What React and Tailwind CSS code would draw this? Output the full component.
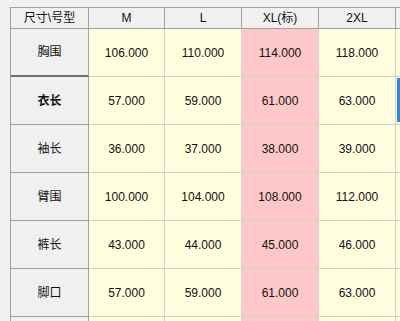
import React from 'react';

const SIZES = ['M', 'L', 'XL(标)', '2XL'];
const ROWS = [
  { name: '胸围', vals: ['106.000', '110.000', '114.000', '118.000'] },
  { name: '衣长', vals: ['57.000', '59.000', '61.000', '63.000'], active: true },
  { name: '袖长', vals: ['36.000', '37.000', '38.000', '39.000'] },
  { name: '臂围', vals: ['100.000', '104.000', '108.000', '112.000'] },
  { name: '裤长', vals: ['43.000', '44.000', '45.000', '46.000'] },
  { name: '脚口', vals: ['57.000', '59.000', '61.000', '63.000'] },
  { name: '', vals: ['', '', '', ''] },
];

const font = { fontFamily: '"Liberation Sans", "Noto Sans CJK SC", sans-serif' };

export default function App() {
  return (
    <div className="w-[400px] h-[321px] overflow-hidden bg-[#f0f0f0] pt-[7px] pl-[10px] text-[12px] text-[#111]" style={font}>
      <div className="grid grid-cols-[78px_76px_77px_77px_77px_40px] border-l border-t border-[#a0a0a0] w-max">
        <div className="h-[21px] flex items-center justify-center bg-[#f0f0f0] border-r border-b border-[#a0a0a0]">尺寸\号型</div>
        {SIZES.map(s => (
          <div key={s} className="h-[21px] flex items-center justify-center bg-[#f0f0f0] border-r border-b border-[#a0a0a0]">{s}</div>
        ))}
        <div className="h-[21px] bg-[#f0f0f0] border-b border-[#a0a0a0]"></div>

        {ROWS.map((row, ri) => (
          <React.Fragment key={ri}>
            {/* row above the active one gets the heavier separator */}
            <div className={`h-[48px] flex items-center justify-center bg-[#f0f0f0] border-r ${ri === 0 ? 'border-b-2 border-b-[#707070]' : 'border-b'} border-[#a0a0a0] ${row.active ? 'font-bold' : ''}`}>{row.name}</div>
            {row.vals.map((v, ci) => (
              <div key={ci} className={`h-[48px] flex items-center justify-center border-r border-b border-[#d0d0d0] ${ci === 2 ? 'bg-[#ffc8c8]' : 'bg-[#ffffe0]'}`}>{v}</div>
            ))}
            <div className={`h-[48px] border-b border-[#d0d0d0] bg-[#ffffe0] ${row.active ? 'pl-px' : ''}`}>
              {row.active && <div className="w-[4px] h-[44px] mt-[1px] bg-[#3584e4]"></div>}
            </div>
          </React.Fragment>
        ))}
      </div>
    </div>
  );
}
